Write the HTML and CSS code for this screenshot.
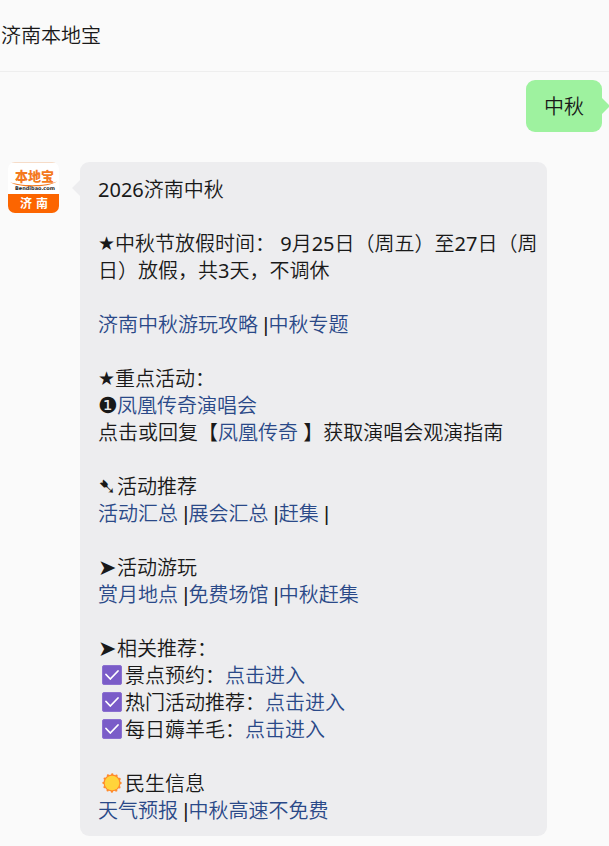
FILE: index.html
```html
<!DOCTYPE html>
<html lang="zh-CN">
<head>
    <meta charset="UTF-8">
    <meta name="viewport" content="width=device-width, initial-scale=1.0">
    <title>济南本地宝</title>
    <link rel="stylesheet" href="styles.css">
</head>
<body>
    <svg class="symbols" aria-hidden="true">
        <symbol id="check" viewBox="0 0 20 20">
            <rect x="0.5" y="0.5" width="19" height="19" rx="1.5" fill="#7a5cc8" stroke="#8b70d0"/>
            <path d="M4 9.5 8.3 14 16 6" fill="none" stroke="#fff" stroke-width="1.8" stroke-linecap="round" stroke-linejoin="round"/>
        </symbol>
    </svg>

    <header class="chat-header">
        <h1>济南本地宝</h1>
    </header>

    <main class="chat">
        <div class="message sent">
            <div class="bubble">中秋</div>
        </div>

        <div class="message received">
            <svg class="avatar" viewBox="0 0 51 51" role="img" aria-label="济南本地宝">
                <rect width="51" height="51" fill="#fff"/>
                <rect width="51" height="1" fill="#f6dcc8"/>
                <rect y="32" width="51" height="19" fill="#fc6500"/>
                <text class="logo-name" x="7" y="19">本地宝</text>
                <path d="M2 20c8 4 36 4.500 47-.5-8 6-38 7-47 .5z" fill="#f47a20"/>
                <text class="logo-url" x="7" y="28">Bendibao.com</text>
                <text class="logo-city" x="12" y="46">济</text>
                <text class="logo-city" x="28" y="46">南</text>
            </svg>

            <div class="bubble">
                <p>2026济南中秋</p>

                <p><span class="star">★</span>中秋节放假时间： 9月25日（周五）至27日（周日）放假，共3天，不调休</p>

                <p><a href="#">济南中秋游玩攻略</a> <span class="sep">|</span><a href="#">中秋专题</a></p>

                <p>
                    <span class="star">★</span>重点活动：<br>
                    <span class="mark">❶</span><a href="#">凤凰传奇演唱会</a><br>
                    点击或回复【<a href="#">凤凰传奇</a> 】获取演唱会观演指南
                </p>

                <p>
                    <span class="mark">➷</span>活动推荐<br>
                    <a href="#">活动汇总</a> <span class="sep">|</span><a href="#">展会汇总</a> <span class="sep">|</span><a href="#">赶集</a> <span class="sep">|</span>
                </p>

                <p>
                    <span class="mark">➤</span>活动游玩<br>
                    <a href="#">赏月地点</a> <span class="sep">|</span><a href="#">免费场馆</a> <span class="sep">|</span><a href="#">中秋赶集</a>
                </p>

                <p>
                    <span class="mark">➤</span>相关推荐：<br>
                    <svg class="emoji"><use href="#check"/></svg>景点预约：<a href="#">点击进入</a><br>
                    <svg class="emoji"><use href="#check"/></svg>热门活动推荐：<a href="#">点击进入</a><br>
                    <svg class="emoji"><use href="#check"/></svg>每日薅羊毛：<a href="#">点击进入</a>
                </p>

                <p>
                    <svg class="emoji" viewBox="0 0 20 20">
                        <circle cx="10" cy="10" r="8.500" fill="#ff8b2c"/>
                        <circle cx="10" cy="10" r="8.500" fill="none" stroke="#ff8b2c" stroke-width="2.400" stroke-linecap="round" stroke-dasharray="0 4.450"/>
                        <circle cx="10" cy="10" r="7.300" fill="#ffd43b"/>
                    </svg>民生信息<br>
                    <a href="#">天气预报</a> <span class="sep">|</span><a href="#">中秋高速不免费</a>
                </p>
            </div>
        </div>
    </main>
</body>
</html>
```
FILE: styles.css
```css
:root {
    --page: #fafafa;
    --line: #eeeeee;
    --text: #191919;
    --link: #2a4988;
    --sent: #9ef29f;
    --received: #ededef;
}

* {
    box-sizing: border-box;
    margin: 0;
    padding: 0;
}

body {
    font-family: "Noto Sans", "Noto Sans CJK SC DemiLight", "Noto Sans CJK SC", sans-serif;
    font-size: 20px;
    font-weight: 400;
    line-height: 27px;
    background-color: var(--page);
    color: var(--text);
}

a {
    color: var(--link);
    text-decoration: none;
}

.symbols {
    display: none;
}

.chat-header {
    padding: 22px 1px;
    border-bottom: 1px solid var(--line);
}

.chat-header h1 {
    font-size: 20px;
    font-weight: 400;
}

.chat {
    display: flex;
    flex-direction: column;
    gap: 30px;
    padding: 8px 7px 10px 8px;
}

.message {
    display: flex;
    align-items: flex-start;
}

.bubble {
    position: relative;
    border-radius: 9px;
}

/* bubble tails */
.bubble::before {
    content: '';
    position: absolute;
    top: 18px;
    border: 8px solid transparent;
}

.sent {
    justify-content: flex-end;
}

.sent .bubble {
    padding: 13px 18px 12px;
    background-color: var(--sent);
}

.sent .bubble::before {
    left: 100%;
    border-left-color: var(--sent);
    border-right-width: 0;
}

.received {
    gap: 21px;
    padding-right: 55px;
}

.received .bubble {
    flex: 1;
    padding: 14px 8px 12px 18px;
    background-color: var(--received);
}

.received .bubble::before {
    right: 100%;
    border-right-color: var(--received);
    border-left-width: 0;
}

.bubble p + p {
    margin-top: 27px;
}

.avatar {
    flex: none;
    width: 51px;
    height: 51px;
    border-radius: 7px;
}

.logo-name {
    font-family: "Noto Sans CJK SC", sans-serif;
    font-size: 13px;
    font-weight: 900;
    fill: #f47a20;
}

.logo-url {
    font-family: "DejaVu Sans", sans-serif;
    font-size: 5px;
    font-weight: 700;
    fill: #222;
}

.logo-city {
    font-family: "Noto Sans CJK SC", sans-serif;
    font-size: 12px;
    font-weight: 700;
    fill: #fff;
}

.star,
.mark {
    display: inline-block;
    font-family: "DejaVu Sans", sans-serif;
    vertical-align: top;
}

.star {
    width: 17px;
    font-size: 19px;
}

.mark {
    width: 19px;
    font-size: 22px;
}

.sep {
    font-family: "Liberation Sans", sans-serif;
    line-height: 20px;
}

.emoji {
    width: 20px;
    height: 20px;
    margin: 0 3px 0 4px;
    vertical-align: -2px;
}
```
